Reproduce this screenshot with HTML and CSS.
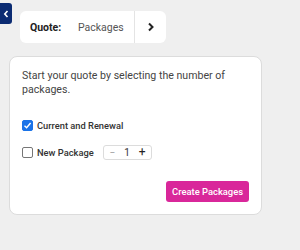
FILE: index.html
```html
<!DOCTYPE html>
<html lang="en">
<head>
    <meta charset="UTF-8">
    <meta name="viewport" content="width=device-width, initial-scale=1.0">
    <title>Quote Packages</title>
    <link rel="stylesheet" href="styles.css">
</head>
<body>
    <div class="top-bar">
        <button class="back-tab" aria-label="Back">
            <svg width="6" height="8" viewBox="0 0 6 8"><path d="M4.5 1 L1.8 4 L4.5 7" fill="none" stroke="#fff" stroke-width="1.6"/></svg>
        </button>
        <div class="crumb">
            <div class="crumb-text">
                <span class="crumb-label">Quote:</span>
                <span class="crumb-value">Packages</span>
            </div>
            <div class="crumb-next">
                <svg width="8" height="10" viewBox="0 0 8 10"><path d="M2 1.5 L5.5 5 L2 8.5" fill="none" stroke="#222" stroke-width="2"/></svg>
            </div>
        </div>
    </div>

    <div class="card">
        <p class="intro">Start your quote by selecting the number of packages.</p>

        <label class="option">
            <span class="box checked">
                <svg width="9" height="9" viewBox="0 0 9 9"><path d="M1.5 4.8 L3.6 6.8 L7.6 2" fill="none" stroke="#fff" stroke-width="1.4"/></svg>
            </span>
            Current and Renewal
        </label>

        <div class="option">
            <span class="box"></span>
            <span class="option-text">New Package</span>
            <div class="stepper">
                <span class="step minus">&minus;</span>
                <span class="count">1</span>
                <span class="step plus">+</span>
            </div>
        </div>

        <div class="actions">
            <button class="create-btn">Create Packages</button>
        </div>
    </div>
</body>
</html>
```

FILE: styles.css
```css
body {
    margin: 0;
    background: #efefef;
    font-family: Roboto, "Liberation Sans", Arial, sans-serif;
    color: #333;
}
.top-bar {
    display: flex;
    align-items: flex-start;
    gap: 8px;
}
.back-tab {
    width: 12px;
    height: 21px;
    margin-top: 3px;
    padding: 0;
    border: none;
    border-radius: 0 3px 3px 0;
    background: #0b2b72;
    display: flex;
    align-items: center;
    justify-content: center;
}
.crumb {
    margin-top: 11px;
    height: 32px;
    width: 146px;
    background: #fff;
    border-radius: 6px;
    display: flex;
    font-size: 10.5px;
}
.crumb-text {
    flex: 1;
    display: flex;
    align-items: center;
    padding-left: 10px;
    border-right: 1px solid #e4e4e4;
}
.crumb-label {
    font-weight: 700;
    color: #222;
    width: 48px;
}
.crumb-value {
    color: #555;
}
.crumb-next {
    width: 31px;
    display: flex;
    align-items: center;
    justify-content: center;
}
.card {
    margin: 13px 0 0 9px;
    width: 253px;
    box-sizing: border-box;
    background: #fff;
    border: 1px solid #dcdcdc;
    border-radius: 8px;
    padding: 12px 12px 12px;
}
.intro {
    margin: 0 0 21px;
    font-size: 10.6px;
    line-height: 14px;
    color: #444;
}
.option {
    display: flex;
    align-items: center;
    font-size: 9.3px;
    font-weight: 500;
    color: #333;
    height: 14px;
    margin-bottom: 13px;
}
.box {
    width: 9px;
    height: 9px;
    border: 1px solid #767676;
    border-radius: 2px;
    margin-right: 4px;
    display: flex;
    align-items: center;
    justify-content: center;
}
.box.checked {
    background: #1a73e8;
    border-color: #1a73e8;
}
.option-text {
    width: 66px;
}
.stepper {
    display: flex;
    align-items: center;
    height: 13px;
    width: 45px;
    border: 1px solid #dcdcdc;
    border-radius: 3px;
    font-size: 10px;
    justify-content: space-around;
    padding: 0 1px;
}
.step {
    color: #999;
    font-weight: 400;
}
.plus {
    color: #222;
    font-size: 12px;
}
.count {
    color: #333;
    font-weight: 400;
}
.actions {
    display: flex;
    justify-content: flex-end;
    margin-top: 22px;
}
.create-btn {
    border: none;
    border-radius: 3px;
    background: #d9279a;
    color: #fff;
    font-family: inherit;
    font-size: 9.4px;
    font-weight: 500;
    height: 21px;
    padding: 0 6px;
}
```
